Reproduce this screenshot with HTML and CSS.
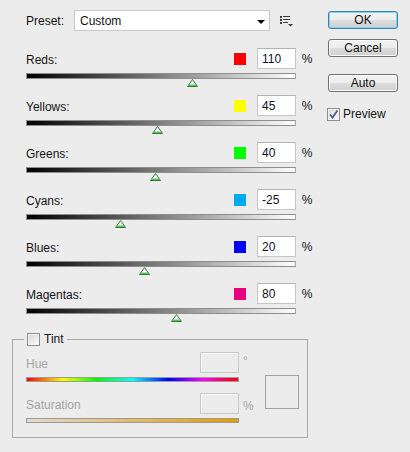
FILE: index.html
```html
<!DOCTYPE html>
<html lang="en">
<head>
    <meta charset="UTF-8">
    <meta name="viewport" content="width=device-width, initial-scale=1.0">
    <title>Black &amp; White</title>
    <link rel="stylesheet" href="styles.css">
</head>
<body>
    <div class="dialog">
        <div class="panel">
            <!-- preset picker -->
            <div class="preset-row">
                <span class="preset-label">Preset:</span>
                <div class="preset-select">
                    <span>Custom</span>
                    <span class="caret"></span>
                </div>
                <svg class="preset-menu" width="14" height="11" viewBox="0 0 14 11" shape-rendering="crispEdges">
                    <rect x="0" y="0" width="2" height="2" fill="#3a3a3a"/>
                    <rect x="3" y="0" width="7" height="1" fill="#3a3a3a"/>
                    <rect x="0" y="3" width="2" height="2" fill="#3a3a3a"/>
                    <rect x="3" y="3" width="7" height="1" fill="#3a3a3a"/>
                    <rect x="0" y="6" width="2" height="2" fill="#3a3a3a"/>
                    <rect x="3" y="6" width="5" height="1" fill="#3a3a3a"/>
                    <polygon points="8,8 13,8 10.5,10.5" fill="#3a3a3a" shape-rendering="auto"/>
                </svg>
            </div>

            <!-- channel sliders, value range -200..300 -->
            <div class="channels">
                <div class="channel">
                    <div class="channel-head">
                        <span class="channel-name">Reds:</span>
                        <span class="swatch swatch-reds"></span>
                        <input class="value" type="text" value="110">
                        <span class="unit">%</span>
                    </div>
                    <div class="track">
                        <svg class="thumb" style="left: 62%" width="11" height="8" viewBox="0 0 11 8"><polygon points="5.5,0.5 10.5,7.5 0.5,7.5" fill="#fff" stroke="#2f7a32"/><rect x="2" y="5.5" width="7" height="1.5" fill="#5fbf5f"/></svg>
                    </div>
                </div>
                <div class="channel">
                    <div class="channel-head">
                        <span class="channel-name">Yellows:</span>
                        <span class="swatch swatch-yellows"></span>
                        <input class="value" type="text" value="45">
                        <span class="unit">%</span>
                    </div>
                    <div class="track">
                        <svg class="thumb" style="left: 49%" width="11" height="8" viewBox="0 0 11 8"><polygon points="5.5,0.5 10.5,7.5 0.5,7.5" fill="#fff" stroke="#2f7a32"/><rect x="2" y="5.5" width="7" height="1.5" fill="#5fbf5f"/></svg>
                    </div>
                </div>
                <div class="channel">
                    <div class="channel-head">
                        <span class="channel-name">Greens:</span>
                        <span class="swatch swatch-greens"></span>
                        <input class="value" type="text" value="40">
                        <span class="unit">%</span>
                    </div>
                    <div class="track">
                        <svg class="thumb" style="left: 48%" width="11" height="8" viewBox="0 0 11 8"><polygon points="5.5,0.5 10.5,7.5 0.5,7.5" fill="#fff" stroke="#2f7a32"/><rect x="2" y="5.5" width="7" height="1.5" fill="#5fbf5f"/></svg>
                    </div>
                </div>
                <div class="channel">
                    <div class="channel-head">
                        <span class="channel-name">Cyans:</span>
                        <span class="swatch swatch-cyans"></span>
                        <input class="value" type="text" value="-25">
                        <span class="unit">%</span>
                    </div>
                    <div class="track">
                        <svg class="thumb" style="left: 35%" width="11" height="8" viewBox="0 0 11 8"><polygon points="5.5,0.5 10.5,7.5 0.5,7.5" fill="#fff" stroke="#2f7a32"/><rect x="2" y="5.5" width="7" height="1.5" fill="#5fbf5f"/></svg>
                    </div>
                </div>
                <div class="channel">
                    <div class="channel-head">
                        <span class="channel-name">Blues:</span>
                        <span class="swatch swatch-blues"></span>
                        <input class="value" type="text" value="20">
                        <span class="unit">%</span>
                    </div>
                    <div class="track">
                        <svg class="thumb" style="left: 44%" width="11" height="8" viewBox="0 0 11 8"><polygon points="5.5,0.5 10.5,7.5 0.5,7.5" fill="#fff" stroke="#2f7a32"/><rect x="2" y="5.5" width="7" height="1.5" fill="#5fbf5f"/></svg>
                    </div>
                </div>
                <div class="channel">
                    <div class="channel-head">
                        <span class="channel-name">Magentas:</span>
                        <span class="swatch swatch-magentas"></span>
                        <input class="value" type="text" value="80">
                        <span class="unit">%</span>
                    </div>
                    <div class="track">
                        <svg class="thumb" style="left: 56%" width="11" height="8" viewBox="0 0 11 8"><polygon points="5.5,0.5 10.5,7.5 0.5,7.5" fill="#fff" stroke="#2f7a32"/><rect x="2" y="5.5" width="7" height="1.5" fill="#5fbf5f"/></svg>
                    </div>
                </div>
            </div>

            <!-- tint group (disabled) -->
            <fieldset class="tint">
                <legend class="tint-legend">
                    <span class="checkbox"></span>
                    <span>Tint</span>
                </legend>
                <div class="tint-body">
                    <div class="tint-controls">
                        <div class="tint-head">
                            <span class="tint-name">Hue</span>
                            <span class="tint-value"></span>
                            <span class="tint-unit">&deg;</span>
                        </div>
                        <div class="tint-bar hue-bar"></div>
                        <div class="tint-head sat-head">
                            <span class="tint-name">Saturation</span>
                            <span class="tint-value"></span>
                            <span class="tint-unit">%</span>
                        </div>
                        <div class="tint-bar sat-bar"></div>
                    </div>
                    <div class="tint-swatch"></div>
                </div>
            </fieldset>
        </div>

        <div class="actions">
            <button class="btn btn-default">OK</button>
            <button class="btn btn-cancel">Cancel</button>
            <button class="btn btn-auto">Auto</button>
            <label class="preview">
                <span class="checkbox checked">
                    <svg width="11" height="11" viewBox="0 0 11 11"><path d="M2 5.5 L4.5 8.5 L9.5 1.5" fill="none" stroke="#4a5c8c" stroke-width="1.8"/></svg>
                </span>
                <span>Preview</span>
            </label>
        </div>
    </div>
</body>
</html>
```

FILE: styles.css
```css
body {
    margin: 0;
    background: #ececec;
    font-family: "Liberation Sans", Arial, sans-serif;
    font-size: 12px;
    color: #141414;
}
.dialog {
    display: flex;
    padding: 10px 0 0 12px;
}
.panel {
    width: 316px;
}

/* preset row */
.preset-row {
    display: flex;
    align-items: center;
    height: 21px;
    margin-left: 14px;
}
.preset-label {
    width: 48px;
}
.preset-select {
    width: 196px;
    height: 21px;
    box-sizing: border-box;
    border: 1px solid #c8c8c8;
    background: #fff;
    display: flex;
    align-items: center;
    justify-content: space-between;
    padding: 0 4px 0 5px;
}
.caret {
    width: 0;
    height: 0;
    border-left: 4px solid transparent;
    border-right: 4px solid transparent;
    border-top: 4px solid #000;
    margin-top: 2px;
}
.preset-menu {
    margin-left: 10px;
    margin-top: 1px;
}

/* channel sliders */
.channels {
    margin: 17px 0 0 14px;
    width: 288px;
}
.channel {
    padding-bottom: 16px;
}
.channel-head {
    display: flex;
    align-items: center;
    height: 21px;
    margin-bottom: 4px;
}
.channel-name {
    flex: 1;
    padding-top: 2px;
}
.swatch {
    width: 12px;
    height: 12px;
    margin-right: 11px;
}
.swatch-reds { background: #ff0000; }
.swatch-yellows { background: #ffff00; }
.swatch-greens { background: #00ff00; }
.swatch-cyans { background: #00a9ec; }
.swatch-blues { background: #0000ff; }
.swatch-magentas { background: #e6007e; }
.value {
    width: 39px;
    height: 21px;
    box-sizing: border-box;
    margin: 0;
    border: 1px solid #c6c6c6;
    border-top-color: #b4b4b4;
    padding: 0 0 0 4px;
    background: #fff;
    font-family: inherit;
    font-size: 12px;
    color: #10102a;
    outline: none;
}
.unit {
    width: 14px;
    margin-left: 4px;
    text-align: center;
}
.track {
    position: relative;
    width: 270px;
    height: 6px;
    box-sizing: border-box;
    border: 1px solid #8e8e8e;
    border-right-color: #a8a8a8;
    background: linear-gradient(to right, #000, #fff);
}
.thumb {
    position: absolute;
    top: 5px;
    margin-left: -6px;
    display: block;
}

/* tint group */
.tint {
    margin: 2px 0 0;
    width: 296px;
    box-sizing: border-box;
    border: 1px solid #a9a9a9;
    padding: 0 7px 14px 13px;
    color: #a4a4a4;
}
.tint-legend {
    display: flex;
    align-items: center;
    height: 14px;
    padding: 0 3px;
    margin-left: -2px;
    color: #141414;
}
.tint-legend .checkbox {
    margin-right: 4px;
}
.tint-body {
    display: flex;
    align-items: center;
    margin-top: 6px;
}
.tint-controls {
    width: 233px;
}
.tint-head {
    display: flex;
    align-items: center;
    height: 21px;
    margin-bottom: 4px;
}
.sat-head {
    margin-top: 11px;
}
.tint-name {
    flex: 1;
    padding-top: 2px;
}
.tint-value {
    width: 39px;
    height: 21px;
    box-sizing: border-box;
    border: 1px solid #c9c9c9;
    box-shadow: inset 1px 1px 0 #f8f8f8;
}
.tint-unit {
    width: 16px;
    margin-left: 4px;
    align-self: flex-start;
    padding-top: 2px;
}
.sat-head .tint-unit {
    align-self: center;
    padding-top: 4px;
}
.tint-bar {
    width: 213px;
    height: 5px;
    box-sizing: border-box;
    border: 1px solid #9a9a9a;
}
.hue-bar {
    background: linear-gradient(to right, #ff0000, #ffff00 17%, #00ff00 33%, #00ffff 50%, #0000ff 67%, #ff00ff 83%, #ff0000);
}
.sat-bar {
    background: linear-gradient(to right, #e1dbd0, #e59c00);
}
.tint-swatch {
    width: 34px;
    height: 34px;
    box-sizing: border-box;
    border: 1px solid #a3a3a3;
    margin: 9px 0 0 6px;
}

/* checkboxes */
.checkbox {
    width: 13px;
    height: 13px;
    box-sizing: border-box;
    border: 1px solid #8f8f8f;
    background: linear-gradient(135deg, #d6d6d6, #fbfbfb);
    box-shadow: inset 0 0 0 1px #f2f2f2;
    display: flex;
    align-items: center;
    justify-content: center;
}

/* right column */
.actions {
    width: 70px;
    display: flex;
    flex-direction: column;
    margin-top: 1px;
}
.btn {
    height: 18px;
    box-sizing: border-box;
    padding: 0;
    border: 1px solid #707070;
    border-radius: 3px;
    background: linear-gradient(#f3f3f3, #ececec 50%, #dddddd 50%, #d0d0d0);
    box-shadow: inset 0 0 0 1px #fbfbfb;
    font-family: inherit;
    font-size: 12px;
    color: #111;
}
.btn-default {
    border-color: #3c7fb1;
    box-shadow: inset 0 0 0 1px #7fd3f7;
}
.btn-cancel {
    margin-top: 10px;
}
.btn-auto {
    margin-top: 17px;
}
.preview {
    display: flex;
    align-items: center;
    gap: 3px;
    margin-top: 15px;
    margin-left: -1px;
}
```
